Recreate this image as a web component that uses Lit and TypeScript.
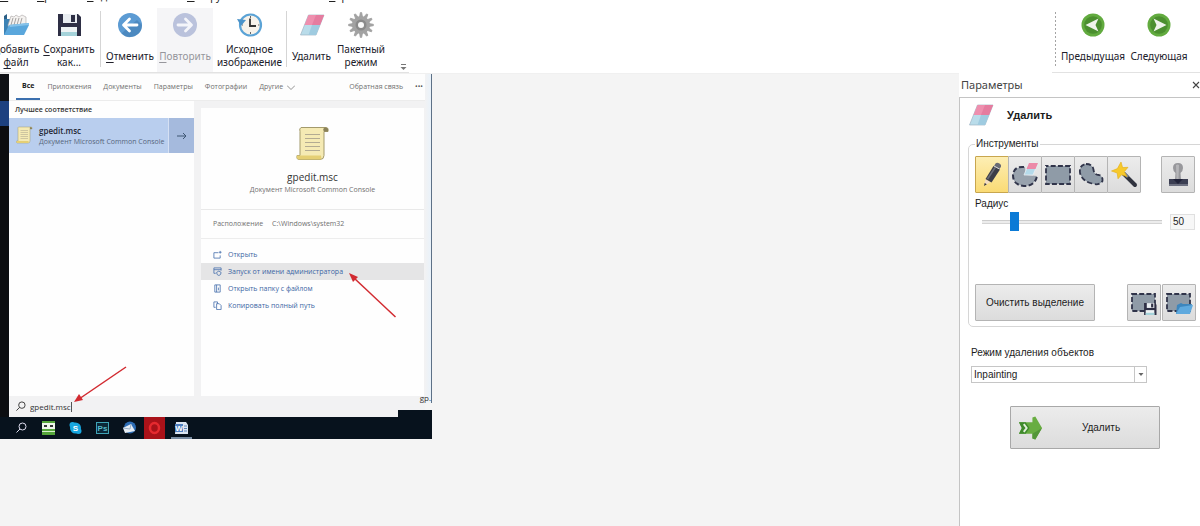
import { LitElement, html, svg, css } from "lit";
import { customElement, state } from "lit/decorators.js";

const folder = svg`
  <path d="M1 4 L4 2 L4 22 L1 22 Z" fill="#2c5f86"/>
  <path d="M1 7 H7 V23 H1 Z" fill="#3c82b4"/>
  <path d="M5 13 L8 4 L11 5 L13 3 L16 5 L19 3 L23 5 L23 14 L6 18 Z" fill="#f4f2f0" stroke="#a9a5a4" stroke-width=".6"/>
  <path d="M8 13 L10 6 M11 13 L13 6 M14 13 L16 6 M17 13 L19 6" stroke="#9b9796" stroke-width=".9" fill="none"/>
  <path d="M6 13 L27 11 L21 23 H1 Z" fill="#5aa7dc"/>
  <path d="M6 13 L27 11 L26 13 L7 15 Z" fill="#86c3ea"/>`;

const floppy = svg`
  <path d="M2 2 H22 L25 5 V24 H2 Z" fill="#2e2f45"/>
  <rect x="7" y="2" width="14" height="9" fill="#e9edf1"/>
  <rect x="15" y="3" width="4" height="7" fill="#2e2f45"/>
  <rect x="5" y="15" width="16" height="9" fill="#eef3f4"/>
  <rect x="5" y="20" width="16" height="4" fill="#a5d3da"/>`;

const eraser = svg`
  <path d="M9.500 3 H25 L17 23 H1.500 Z" fill="#b9dcea" stroke="#9fb4c4" stroke-width=".7"/>
  <path d="M9.500 3 H25 L21 13 H5.500 Z" fill="#ee8fae"/>
  <path d="M17 3 H25 L21 13 H13 Z" fill="#e57c9f"/>
  <path d="M13 13 H21 L17 23 H9.500 Z" fill="#9fcbe0"/>`;

const backArrow = svg`
  <circle cx="13" cy="13" r="12" fill="#5c9bd3"/>
  <path d="M4.500 21.500 A12 12 0 0 0 25 13 L20 8 Z" fill="#4682b8" opacity=".7"/>
  <path d="M20 13 H7 M12.500 7 L6.500 13 L12.500 19" stroke="#fff" stroke-width="2.800" fill="none" stroke-linecap="round" stroke-linejoin="round"/>`;

const forwardArrow = svg`
  <circle cx="13" cy="13" r="12" fill="#bac2dc"/>
  <path d="M6 13 H19 M13.500 7 L19.500 13 L13.500 19" stroke="#f4f5fa" stroke-width="2.800" fill="none" stroke-linecap="round" stroke-linejoin="round"/>`;

const history = svg`
  <circle cx="13.500" cy="13" r="10.500" fill="#f7f2ea" stroke="#5ba3d6" stroke-width="2.200"/>
  <path d="M13 6.500 V14 H19" stroke="#333" stroke-width="1.800" fill="none"/>
  <path d="M13.500 4 V6 M13.500 20 V22 M21 13 H22.500 M5 13 H6" stroke="#666" stroke-width="1"/>
  <path d="M0 7 L4 14 L9 8 Z" fill="#4b93c9"/>`;

const gear = svg`
  ${[0, 30, 60, 90, 120, 150, 180, 210, 240, 270, 300, 330].map(
    (a) => svg`<path d="M11.500 5 L12.300 .6 H13.700 L14.500 5 Z" fill="#a2a2a2" stroke="#a2a2a2" stroke-width=".8" transform="rotate(${a} 13 13)"/>`
  )}
  <circle cx="13" cy="13" r="9" fill="#a2a2a2"/>
  <circle cx="13" cy="13" r="5.500" fill="#8a8a8a"/>
  <circle cx="13" cy="13" r="3" fill="#fafafa"/>`;

const greenPrev = svg`
  <circle cx="13" cy="13" r="11.500" fill="#62ab3f"/>
  <circle cx="13" cy="13" r="8.800" fill="#4b8f2f"/>
  <path d="M5.500 13 L18.500 6.500 L15.500 13 L18.500 19.500 Z" fill="#eef3ea"/>`;

const greenNext = svg`
  <circle cx="13" cy="13" r="11.500" fill="#62ab3f"/>
  <circle cx="13" cy="13" r="8.800" fill="#4b8f2f"/>
  <path d="M20.500 13 L7.500 6.500 L10.500 13 L7.500 19.500 Z" fill="#eef3ea"/>`;

const pencil = svg`
  <path d="M6 25 L7.500 18 L12.500 21 Z" fill="#f2dcc0"/>
  <path d="M6 25 L6.700 22 L8.800 23.300 Z" fill="#333"/>
  <path d="M7.500 18 L15.500 5 L22 8.500 L13.500 21.500 Z" fill="#3d3e48"/>
  <path d="M9.500 18 L17.500 6" stroke="#6b6d78" stroke-width="1.500"/>
  <path d="M16 5 L17.500 2.500 Q19 1 21.500 2.600 Q23.800 4 23 5.800 L21.500 8 Z" fill="#6a6b74"/>
  <path d="M16 5 L21.500 8" stroke="#d5d5d8" stroke-width="1"/>`;

const lassoEraser = svg`
  <path d="M14 6 Q3 5 2 14 Q2 24 13 25 Q24 25 26 15 L15 14 Z" fill="#98a2ad"/>
  <path d="M13 6 Q3 5 2 14 Q2 24 13 25 Q24 25 26 15" fill="none" stroke="#30344a" stroke-width="2" stroke-dasharray="5 2.500"/>
  <path d="M18 2 H27 L22 14 H13 Z" fill="#b5daea" stroke="#e8eef2" stroke-width=".8"/>
  <path d="M18 2 H27 L24.500 8 H15.500 Z" fill="#ec8aa8"/>`;

const rectSelect = svg`
  <rect x="2" y="5" width="24" height="18" fill="#8f9ba7"/>
  <rect x="2" y="5" width="24" height="18" fill="none" stroke="#30344a" stroke-width="1.800" stroke-dasharray="5 2.200" stroke-dashoffset="2.500"/>`;

const freeSelect = svg`
  <path d="M9 3 Q16 3 16.500 9 Q17.500 14 22 14 Q26 15 25.500 20 Q22 25 15 22.500 Q5 20 3 12 Q2 4 9 3 Z" fill="#8f9ba7" stroke="#30344a" stroke-width="1.800" stroke-dasharray="5 2.500"/>`;

const wand = svg`
  <path d="M14 13 L25 24" stroke="#30333f" stroke-width="4" stroke-linecap="round"/>
  <path d="M14 12 L18 16" stroke="#7c8494" stroke-width="3"/>
  <path d="M11 1 L12.600 6.600 L18 6.300 L14.300 10.700 L17 15.600 L11.500 13.800 L8 17.800 L7.200 12 L1.500 10 L7.400 7.600 Z" fill="#f7c92c" stroke="#e3ad14" stroke-width=".6"/>`;

const stamp = svg`
  <path d="M14 2 Q19 2 19 7 Q19 10 16.500 12 L17 19 H11 L11.500 12 Q9 10 9 7 Q9 2 14 2 Z" fill="#98989c"/>
  <path d="M12 4 Q14 3 15 4 L14.500 18 H12.500 Z" fill="#b6b6b9"/>
  <path d="M5 18 H24 V23 H5 Z" fill="#3c3f53"/>
  <path d="M9 18 H19 L14 23 Z" fill="#22243a"/>
  <path d="M5 23 H24 V25 H5 Z" fill="#6d7080"/>`;

const saveSelection = svg`
  <rect x="2" y="5" width="23" height="17" fill="#8f9ba7" stroke="#30344a" stroke-width="1.800" stroke-dasharray="5 2.200"/>
  <g transform="translate(13 13) scale(.54)">${floppy}</g>`;

const loadSelection = svg`
  <rect x="2" y="5" width="23" height="17" fill="#8f9ba7" stroke="#30344a" stroke-width="1.800" stroke-dasharray="5 2.200"/>
  <path d="M12 16 L16 14 L18 15 L27 15 L24 25 H11 Z" fill="#3d86bd"/>
  <path d="M15 18 L28 16 L25 25 H11 Z" fill="#5ea9de"/>`;

const goArrow = svg`
  <path d="M1 7 H15 V2 L18 1 L25 13 L18 25 L15 24 V19 H1 L4 13 Z" fill="#68ad41"/>
  <path d="M1 7 H8 L12 13 L8 19 H1 L4 13 Z" fill="#3f8a2c"/>
  <path d="M6 9 L9 13 L6 17" stroke="#e3f0dc" stroke-width="2" fill="none"/>
  <path d="M15 19 L25 13 L18 25 L15 24 Z" fill="#539638"/>`;

const scroll = svg`
  <path d="M5 2 H30 Q33 2 32 6 H28 V30 Q28 34 24 34 H3 Q0 34 1 30 H4 V6 Q3 3 5 2 Z" fill="#f5eab4" stroke="#a39a6c" stroke-width="1"/>
  <path d="M4 30 H25 Q26 34 24 34 H3 Q0 33 1 30 Z" fill="#e5cf74"/>
  <path d="M28 6 Q26 3 29 2 Q33 2 32 6 Z" fill="#8b825a"/>
  <path d="M9 9 H24 M9 13 H24 M9 17 H24 M9 21 H24 M9 25 H24" stroke="#b3ab92" stroke-width="1.200"/>`;

const magnifier = svg`
  <circle cx="7.500" cy="4.500" r="3.500" fill="none" stroke="currentColor" stroke-width="1"/>
  <path d="M5 7 L1.500 10.500" stroke="currentColor" stroke-width="1"/>`;

const icon = (box: string, cls: string, body: unknown) =>
  html`<svg class=${cls} viewBox=${box} aria-hidden="true">${body}</svg>`;

@customElement("tool-button")
class ToolButton extends LitElement {
  static properties = {
    label: {}, hot: {}, glyph: { attribute: false }, off: { type: Boolean },
  };
  declare label: string;
  declare hot: string;
  declare glyph: unknown;
  declare off: boolean;

  static styles = css`
    :host { display: block; flex: none; }
    .tool {
      box-sizing: border-box; width: 100%; height: 64px; margin: 0; padding: 4px 0 0;
      border: 0; background: none; color: #20202a;
      font: 10px/13px "Noto Sans", "Open Sans", sans-serif;
      display: flex; flex-direction: column; align-items: center;
    }
    .tool:disabled { background: #f5f5f7; color: #96969c; }
    .icon { width: 26px; height: 26px; flex: none; }
    .label { flex: 1; display: flex; align-items: center; text-align: center; white-space: pre; padding-top: 2px; }
    u { text-underline-offset: 2px; }
  `;

  render() {
    const text = this.label.split(this.hot || "\u0000");
    return html`<button class="tool" ?disabled=${this.off}>
      ${icon("0 0 26 26", "icon", this.glyph)}
      <span class="label"><span>${text[0]}${this.hot ? html`<u>${this.hot}</u>` : ""}${text[1] ?? ""}</span></span>
    </button>`;
  }
}

@customElement("search-shot")
class SearchShot extends LitElement {
  static styles = css`
    :host { display: block; font: 7px/10px "Open Sans", "Noto Sans", sans-serif; color: #707070; }
    button { font: inherit; color: inherit; border: 0; background: none; padding: 0; margin: 0; text-align: left; }
    a { color: inherit; text-decoration: none; }
    .top { display: flex; height: 336px; }
    .strip { width: 9px; flex: none; background: linear-gradient(#101216 27px, #1d4180 27px, #1d4180 52px, #0c0d10 52px); }
    .search { flex: 1; background: #f2f2f3; }
    .edge { width: 6px; height: 329px; box-sizing: content-box; border-right: 1px solid #5d7187; display: flex; align-items: flex-end; justify-content: flex-end; background: linear-gradient(90deg, #f2f2f3, #e9f2fa); color: #333; font-size: 8px; }
    .tabs { height: 27px; background: #fdfdfd; display: flex; align-items: stretch; padding: 0 2px 0 7px; box-sizing: border-box; border-bottom: 1px solid #ececec; }
    .tab { margin-right: 12px; }
    .tab.on { font-weight: 700; color: #222; padding: 0 6px; margin-right: 7px; border-bottom: 2px solid #3b6fae; }
    .tab.more { display: flex; align-items: center; gap: 4px; }
    .chev { width: 8px; height: 5px; }
    .feedback { margin-left: auto; line-height: 26px; }
    .dots { margin-left: 12px; color: #555; }
    .cols { display: flex; height: 295px; }
    .left { width: 185px; background: #fefefe; }
    .best { margin: 0; height: 17px; padding-left: 6px; font: 600 7px/17px "Open Sans", "Noto Sans", sans-serif; color: #333; }
    .hit { display: flex; width: 100%; height: 35px; background: #b9ceee; align-items: center; }
    .hit .page { width: 17px; height: 18px; flex: none; margin: 0 6px 2px 7px; }
    .hit-text { flex: 1; white-space: nowrap; color: #56657c; line-height: 11px; }
    .hit-text b { display: block; color: #1e2633; font-weight: 600; font-size: 8px; }
    .go { width: 26px; height: 35px; flex: none; box-sizing: border-box; background: #a5badd; display: grid; place-items: center; color: #3e5673; border-left: 1px solid #d5e0f3; }
    .go svg { width: 10px; height: 8px; }
    .card { flex: 1; margin: 7px 1px 0 7px; background: #fefefe; }
    .hero { height: 102px; border-bottom: 1px solid #e9e9e9; display: flex; flex-direction: column; align-items: center; box-sizing: border-box; padding-top: 17px; }
    .hero .page { width: 34px; height: 37px; }
    .name { margin-top: 8px; font-size: 10px; line-height: 15px; color: #333; }
    .place { height: 28px; border-bottom: 1px solid #ededed; display: flex; align-items: center; padding-left: 12px; gap: 9px; }
    .acts { padding-top: 7px; color: #3c66a4; }
    .act { display: flex; width: 100%; height: 17px; align-items: center; gap: 6px; padding-left: 12px; }
    .act.hot { background: #e5e5e6; }
    .act svg { width: 9px; height: 9px; }
    .query { position: relative; z-index: 1; display: flex; align-items: center; height: 21px; color: #333; padding-left: 6px; }
    .query svg { width: 11px; height: 11px; flex: none; }
    .query input { border: 0; padding: 0 0 0 4px; background: none; font: 8px/12px "Open Sans", "Noto Sans", sans-serif; color: #333; width: 120px; outline: none; }
    .foot { display: flex; height: 7px; background: #07121d; }
    .foot .strip { background: #0b0d11; }
    .foot .tail { width: 389px; background: #f2f2f3; }
    .search { height: 336px; }
  `;

  render() {
    const acts = [
      ["Открыть", svg`<path d="M1 3 V9 H8 V6 M1 3 H6 M8 1 V4 M6.500 2.500 H9.500"/>`],
      ["Запуск от имени администратора", svg`<path d="M3 7 H1 V1 H9 V4 M1 3 H9 M6.500 4.500 L9 6 Q9 9 6.500 9.500 Q4 9 4 6 Z"/>`],
      ["Открыть папку с файлом", svg`<path d="M2 1 H8 V9 H2 Z M4 1 V9 M6 4 V7"/>`],
      ["Копировать полный путь", svg`<path d="M3 7 H1 V1 H5 V3 M4 3 H7 L9 5 V9.500 H4 Z"/>`],
    ] as const;
    return html`
      <div class="top">
        <div class="strip"></div>
        <div class="search">
          <div class="tabs">
            <button class="tab on">Все</button>
            ${["Приложения", "Документы", "Параметры", "Фотографии"].map((t) => html`<button class="tab">${t}</button>`)}
            <button class="tab more">Другие ${icon("0 0 8 5", "chev", svg`<path d="M0 .5 L4 4.500 L8 .5" fill="none" stroke="#777" stroke-width=".8"/>`)}</button>
            <a class="feedback" href="#">Обратная связь</a>
            <button class="dots">•••</button>
          </div>
          <div class="cols">
            <div class="left">
              <h2 class="best">Лучшее соответствие</h2>
              <button class="hit">
                ${icon("0 0 34 36", "page", scroll)}
                <span class="hit-text"><b>gpedit.msc</b>Документ Microsoft Common Console</span>
                <span class="go">${icon("0 0 10 8", "", svg`<path d="M0 4 H9 M6 1 L9 4 L6 7" fill="none" stroke="currentColor"/>`)}</span>
              </button>
            </div>
            <div class="card">
              <div class="hero">
                ${icon("0 0 34 36", "page", scroll)}
                <span class="name">gpedit.msc</span>
                <span>Документ Microsoft Common Console</span>
              </div>
              <div class="place"><span>Расположение</span><span>C:\\Windows\\system32</span></div>
              <div class="acts">
                ${acts.map(([t, g], i) => html`<button class="act ${i === 1 ? "hot" : ""}">
                  <svg viewBox="0 0 10 10" fill="none" stroke="#4871ad" stroke-width=".9">${g}</svg>${t}</button>`)}
              </div>
            </div>
          </div>
          <div class="query">
            ${icon("0 0 12 12", "", magnifier)}
            <input aria-label="Поиск" value="gpedit.msc">
          </div>
        </div>
        <div class="edge">gp.</div>
      </div>
      <div class="foot"><div class="strip"></div><div class="tail"></div></div>
      <task-bar></task-bar>
    `;
  }
}

@customElement("task-bar")
class TaskBar extends LitElement {
  static styles = css`
    :host { display: flex; height: 22px; padding-left: 8px; background: #07121d; }
    .app { width: 27px; height: 22px; flex: none; color: #dde; font: 700 8px "Liberation Sans", sans-serif; }
  `;
  render() {
    const apps = [
      svg`<g transform="translate(7 5)">${magnifier}</g>`,
      svg`<rect x="7" y="4" width="13" height="14" fill="#55a53a"/><rect x="7" y="6" width="13" height="6" fill="#eef5ea"/><path d="M9 9 H12 M15 9 H18" stroke="#333" stroke-width="2"/><path d="M7 14.500 H20" stroke="#d8efcf" stroke-width="1"/>`,
      svg`<circle cx="13.500" cy="11" r="5.500" fill="#18a7e0"/><circle cx="10.500" cy="8" r="3" fill="#18a7e0"/><circle cx="16.500" cy="14" r="3" fill="#18a7e0"/><text x="13.500" y="14" text-anchor="middle" fill="#fff">S</text>`,
      svg`<rect x="7.500" y="5.500" width="12" height="11" fill="#0b2838" stroke="#3fa3b5"/><text x="13.500" y="14" text-anchor="middle" fill="#58bccb">Ps</text>`,
      svg`<circle cx="14" cy="10.500" r="6" fill="#2d6db5"/><path d="M7 11 L15 7 L19 14 L9 16 Z" fill="#e6edf4"/><path d="M7 11 L14 12 L15 7" fill="none" stroke="#9ab0c6"/>`,
      svg`<rect x="1" y="0" width="21" height="22" fill="#a91219"/><ellipse cx="11.500" cy="11" rx="4.500" ry="5" fill="none" stroke="#e62a2f" stroke-width="2.500"/>`,
      svg`<path d="M6 5 H16 L18 8 V17 H5 Z" fill="#dce6f2"/><rect x="5" y="7" width="8" height="8" fill="#4e7fc0"/><text x="9" y="14" text-anchor="middle" fill="#fff">W</text><path d="M14 9 H17 M14 11.500 H17 M14 14 H17" stroke="#5c85ba"/><path d="M1 21 H22" stroke="#9fb6cf" stroke-width="1.500"/>`,
    ];
    return apps.map((a) => html`<svg class="app" viewBox="0 0 27 22">${a}</svg>`);
  }
}

@customElement("app-root")
class AppRoot extends LitElement {
  @state() private radius = 50;
  @state() private tool = 0;

  static styles = css`
    :host { display: flex; flex-direction: column; min-height: 100vh; overflow: hidden; background: #fff; color: #1c1c1c; font: 10px/14px "Liberation Sans", Arial, sans-serif; }
    .menu { height: 3px; display: grid; grid-template-columns: 37px 50px 100px 142px auto; align-content: end; overflow: hidden; font: 10px/14px "Noto Sans", sans-serif; }
    .menu a { color: #222; text-decoration: none; }
    .ribbon { display: flex; justify-content: space-between; height: 70px; overflow: hidden; }
    .group { display: flex; align-items: flex-start; padding-top: 5px; box-sizing: border-box; border-bottom: 1px solid #e2e2e2; }
    .main { margin-left: -10px; }
    .next { flex: none; width: 148px; padding-left: 3px; }
    .w1 { width: 52px; } .w2 { width: 54px; } .w3 { width: 56px; } .w4 { width: 73px; } .w5 { width: 49px; } .w6 { width: 50px; } .w7 { width: 66px; }
    .sep { width: 1px; height: 56px; margin: 3px 0 0; background: #d5d5d5; }
    .sep.wide { margin-left: 4px; margin-right: 2px; }
    .grip { height: 56px; margin: 4px 4px 0 0; width: 1px; background: repeating-linear-gradient(#a4a4a4 0 2px, #fff 2px 4px); }
    .more { border: 0; background: none; padding: 0; margin: 0 2px 0 14px; align-self: flex-end; height: 8px; display: flex; }
    .more svg { width: 7px; height: 7px; }
    .body { flex: 1; display: flex; }
    .canvas { flex: 1; background: #f4f4f4; border-top: 1px solid #f0f0f0; min-width: 0; }
    .shot { position: relative; width: 432px; }
    .marks { position: absolute; left: 0; top: 0; z-index: 2; width: 432px; height: 365px; pointer-events: none; }
    .panel { width: 241px; flex: none; display: flex; flex-direction: column; }
    .head { display: flex; align-items: center; justify-content: space-between; height: 24px; padding-left: 2px; font: 11px/14px "Noto Sans", sans-serif; color: #444; }
    .head h1 { font: inherit; margin: 0; }
    .close { border: 0; background: none; padding: 0; height: 8px; display: flex; }
    .close svg { width: 8px; height: 8px; }
    .params { flex: 1; border-top: 1px solid #c4c4c4; border-left: 1px solid #c4c4c4; padding: 4px 0 0 8px; overflow: hidden; }
    .title { display: flex; align-items: center; gap: 13px; height: 26px; }
    .title svg { width: 26px; height: 26px; }
    .title h2 { margin: 0; font: 700 11px/14px "Liberation Sans", Arial, sans-serif; }
    fieldset { margin: 9px -6px 0 0; padding: 5px 0 5px 6px; border: 1px solid #d6d6d6; border-radius: 5px; min-width: 0; box-sizing: border-box; height: 190px; display: flex; flex-direction: column; }
    legend { padding: 0 2px 0 1px; line-height: 14px; }
    .row { display: flex; align-items: center; }
    .btn { font: inherit; color: inherit; margin: 0; padding: 0; box-sizing: border-box; border: 1px solid #b4b4b4; border-radius: 1px; background: linear-gradient(#ececec, #dcdcdc); display: flex; align-items: center; justify-content: center; }
    .sq { width: 34px; height: 37px; margin-right: -1px; }
    .sq svg { width: 28px; height: 28px; }
    .sq.on { background: linear-gradient(#fdeeb4, #fadb75); border-color: #c8a64e; }
    .sq.stamp { margin-left: 21px; }
    .radius { margin: 4px 0 1px; }
    .slider { -webkit-appearance: none; appearance: none; width: 180px; height: 19px; margin: 0 8px 0 7px; background: linear-gradient(#ccc, #ccc) 0 8px / 100% 1px no-repeat, linear-gradient(#ececec, #ececec) 0 9px / 100% 2px no-repeat, linear-gradient(#d4d4d4, #d4d4d4) 0 11px / 100% 1px no-repeat; }
    .slider::-webkit-slider-thumb { -webkit-appearance: none; width: 9px; height: 19px; background: #0b7ad6; border: 0; }
    .num { box-sizing: border-box; width: 25px; height: 16px; border: 1px solid #e0e0e0; background: #f7f7f7; font: inherit; color: inherit; padding: 0 2px; }
    .bottom { margin-top: auto; }
    .clear { width: 120px; height: 37px; margin-right: 32px; }
    .bottom .sq { margin-right: 1px; }
    .mode { display: block; margin: 19px 0 6px 3px; }
    .combo { display: grid; width: 176px; margin-left: 3px; height: 17px; }
    .combo > * { grid-area: 1 / 1; }
    .combo select { appearance: none; font: inherit; color: inherit; border: 1px solid #c6c6c6; border-radius: 0; background: #fff; padding: 0 14px 0 2px; margin: 0; height: 17px; }
    .drop { justify-self: end; width: 12px; height: 17px; pointer-events: none; border-left: 1px solid #c6c6c6; }
    .run { width: 150px; height: 43px; margin: 23px 0 0 42px; border-color: #a8a8a8; display: grid; grid-template-columns: 38px 1fr 6px; }
    .run svg { width: 25px; height: 26px; justify-self: center; }
  `;

  private tools = [
    ["Карандаш", pencil], ["Лассо", lassoEraser], ["Прямоугольник", rectSelect],
    ["Свободная форма", freeSelect], ["Волшебная палочка", wand],
  ] as const;

  render() {
    return html`
      <nav class="menu">
        ${["Файл", "Правка", "Выделение", "Инструменты", "Справка"].map(
          (m) => html`<a href="#"><u>${m[0]}</u>${m.slice(1)}</a>`
        )}
      </nav>
      <div class="ribbon">
        <div class="group main">
          <tool-button class="w1" hot="ф" .label=${"Добавить\nфайл"} .glyph=${folder}></tool-button>
          <tool-button class="w2" hot="С" .label=${"Сохранить\nкак..."} .glyph=${floppy}></tool-button>
          <div class="sep wide"></div>
          <tool-button class="w2" hot="О" label="Отменить" .glyph=${backArrow}></tool-button>
          <tool-button class="w3" hot="П" label="Повторить" off .glyph=${forwardArrow}></tool-button>
          <tool-button class="w4" .label=${"Исходное\nизображение"} .glyph=${history}></tool-button>
          <div class="sep"></div>
          <tool-button class="w5" label="Удалить" .glyph=${eraser}></tool-button>
          <tool-button class="w6" .label=${"Пакетный\nрежим"} .glyph=${gear}></tool-button>
          <button class="more" aria-label="Ещё">${icon("0 0 7 7", "", svg`<path d="M1 .5 H6" stroke="#777"/><path d="M.5 3 H6.500 L3.500 6 Z" fill="#777"/>`)}</button>
        </div>
        <div class="group next">
          <div class="grip"></div>
          <tool-button class="w7" label="Предыдущая" .glyph=${greenPrev}></tool-button>
          <tool-button class="w7" label="Следующая" .glyph=${greenNext}></tool-button>
        </div>
      </div>
      <div class="body">
        <main class="canvas">
          <div class="shot">
            <search-shot></search-shot>
            <svg class="marks" viewBox="0 0 432 365" stroke="#d22a30" stroke-width="1.500" fill="#d22a30">
              <path d="M395.500 243 L354 204"/><path d="M349 199 L358 203 L353 208 Z" stroke="none"/>
              <path d="M126 293 L79 325"/><path d="M74 328 L79 320 L83 326 Z" stroke="none"/>
              <path d="M71.500 328 V338" stroke="#555" stroke-width="1"/>
            </svg>
          </div>
        </main>
        <aside class="panel">
          <div class="head"><h1>Параметры</h1>
            <button class="close" aria-label="Закрыть">${icon("0 0 8 8", "", svg`<path d="M1 1 L7 7 M7 1 L1 7" stroke="#444" stroke-width="1.100"/>`)}</button></div>
          <div class="params">
            <div class="title">${icon("0 0 26 26", "", eraser)}<h2>Удалить</h2></div>
            <fieldset>
              <legend>Инструменты</legend>
              <div class="row">
                ${this.tools.map(([name, g], i) => html`<button class="btn sq ${i === this.tool ? "on" : ""}" aria-label=${name}
                  @click=${() => (this.tool = i)}>${icon("0 0 28 28", "", g)}</button>`)}
                <button class="btn sq stamp" aria-label="Штамп">${icon("0 0 28 28", "", stamp)}</button>
              </div>
              <label class="radius" for="radius">Радиус</label>
              <div class="row">
                <input id="radius" class="slider" type="range" min="1" max="300" .value=${String(this.radius)}
                  @input=${(e: Event) => (this.radius = Number((e.target as HTMLInputElement).value))}>
                <input class="num" aria-label="Значение радиуса" .value=${String(this.radius)}>
              </div>
              <div class="row bottom">
                <button class="btn clear">Очистить выделение</button>
                <button class="btn sq" aria-label="Сохранить выделение">${icon("0 0 28 28", "", saveSelection)}</button>
                <button class="btn sq" aria-label="Загрузить выделение">${icon("0 0 28 28", "", loadSelection)}</button>
              </div>
            </fieldset>
            <label class="mode" for="mode">Режим удаления объектов</label>
            <div class="combo">
              <select id="mode"><option>Inpainting</option></select>
              ${icon("0 0 12 17", "drop", svg`<path d="M3.500 7 H8.500 L6 10 Z" fill="#666"/>`)}
            </div>
            <button class="btn run">${icon("0 0 26 26", "", goArrow)}<span>Удалить</span></button>
          </div>
        </aside>
      </div>
    `;
  }
}
